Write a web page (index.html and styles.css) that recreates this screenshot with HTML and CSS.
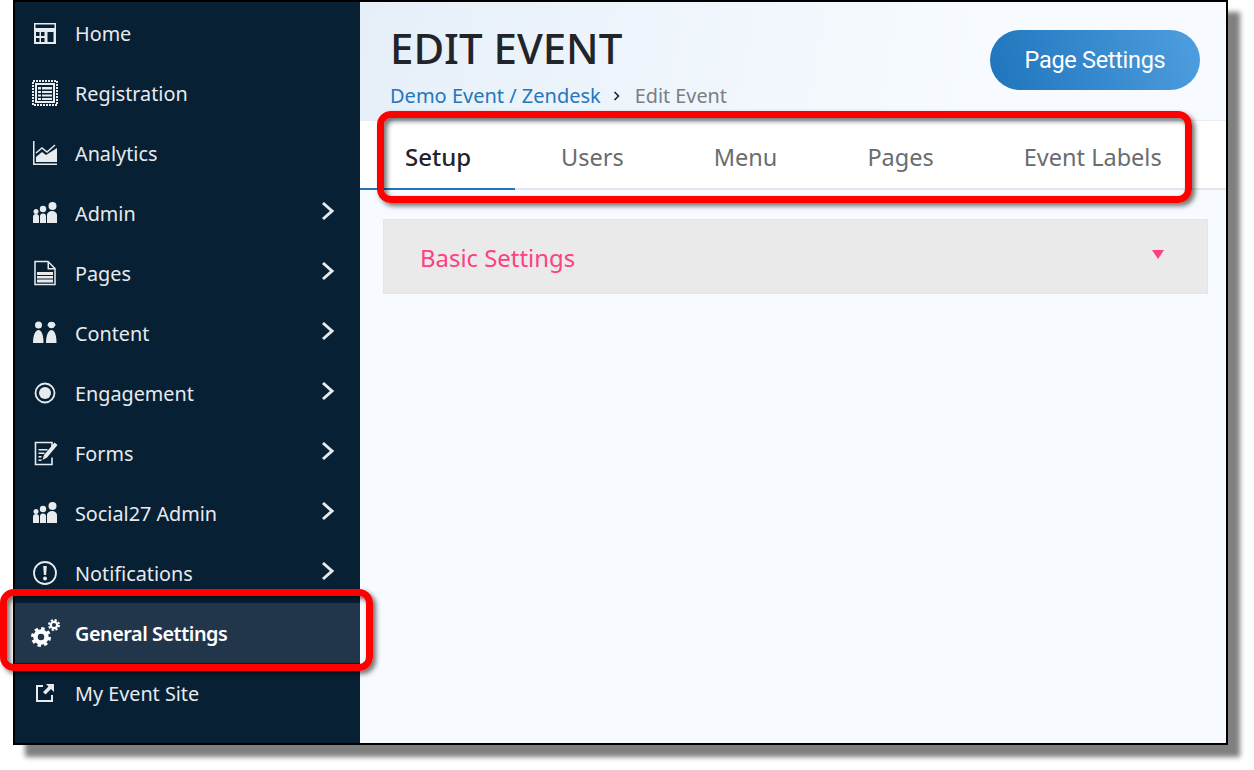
FILE: index.html
```html
<!DOCTYPE html>
<html lang="en">
<head>
<meta charset="utf-8">
<title>Edit Event</title>
<link rel="stylesheet" href="styles.css">
</head>
<body>
<div class="frame">
  <nav class="sidebar">
    <a class="item"><span class="ico"><svg width="26" height="26" viewBox="0 0 26 26"><path fill-rule="evenodd" fill="#e8ebee" d="M2 3h22v21H2zM3.500 8h19V4.500h-19zM4 12v4h3.500v-4zM9 12v4h3.500v-4zM4 18v4h3.500v-4zM9 18v4h3.500v-4zM15.500 12v10h6V12z"/></svg></span><span>Home</span></a>
    <a class="item"><span class="ico"><svg width="26" height="26" viewBox="0 0 26 26"><rect x="1" y="1" width="24" height="24" fill="none" stroke="#e8ebee" stroke-width="2" stroke-dasharray="2 1"/><path fill-rule="evenodd" fill="#e8ebee" d="M3 3h20v20H3zM5 5v16h16V5z"/><path fill="#e8ebee" d="M6 7h14v2.500H6zM6 11h14v2H6zM6 14.500h14v2H6zM6 18h14v2H6z"/><path fill="#071f33" d="M9 7h1v13H9z"/></svg></span><span>Registration</span></a>
    <a class="item"><span class="ico"><svg width="26" height="26" viewBox="0 0 26 26"><path fill="#e8ebee" d="M1 1h1.500v22.500H25V25H1z"/><path fill="#e8ebee" d="M4 22v-5l6-5 4 3 11-7v14z"/><path fill="none" stroke="#e8ebee" stroke-width="1.500" d="M4 13l6-5 5 4 8-7"/></svg></span><span>Analytics</span></a>
    <a class="item"><span class="ico"><svg width="26" height="26" viewBox="0 0 26 26"><g fill="#e8ebee"><circle cx="4" cy="11.500" r="2.500"/><circle cx="11" cy="9" r="3.200"/><circle cx="20.500" cy="6" r="4"/><path d="M1 17a3 3 0 0 1 6 0v6H1zM8 16.500a3 3 0 0 1 6 0V23H8zM15 15a5 4 0 0 1 10 0v8H15z"/></g></svg></span><span>Admin</span><svg class="chev" width="14" height="20" viewBox="0 0 14 20"><path d="M2 2l9 8-9 8" fill="none" stroke="#e8ebee" stroke-width="3"/></svg></a>
    <a class="item"><span class="ico"><svg width="26" height="26" viewBox="0 0 26 26"><path fill="none" stroke="#e8ebee" stroke-width="1.500" d="M3 1.500h13l7 7v16H3z"/><path fill="#e8ebee" d="M15.500 1.500h1.500V8h6v1.500h-7.500zM5 12h16v10.500H5z"/><path fill="#071f33" d="M5 15h16v1H5zM5 18.500h16v1H5z"/></svg></span><span>Pages</span><svg class="chev" width="14" height="20" viewBox="0 0 14 20"><path d="M2 2l9 8-9 8" fill="none" stroke="#e8ebee" stroke-width="3"/></svg></a>
    <a class="item"><span class="ico"><svg width="26" height="26" viewBox="0 0 26 26"><g fill="#e8ebee"><circle cx="6.500" cy="5" r="3.500"/><path d="M6.500 10c3 0 5 5 5 13H1c0-8 2.500-13 5.500-13z"/><path d="M15.500 6a4 4 0 0 1 8 0z"/><circle cx="19.500" cy="5" r="3.300"/><path d="M19.500 10c3 0 5 5 5 13H14c0-8 2.500-13 5.500-13z"/></g></svg></span><span>Content</span><svg class="chev" width="14" height="20" viewBox="0 0 14 20"><path d="M2 2l9 8-9 8" fill="none" stroke="#e8ebee" stroke-width="3"/></svg></a>
    <a class="item"><span class="ico"><svg width="26" height="26" viewBox="0 0 26 26"><circle cx="13" cy="13" r="9.500" fill="none" stroke="#e8ebee" stroke-width="1.800"/><circle cx="13" cy="13" r="6" fill="#e8ebee"/></svg></span><span>Engagement</span><svg class="chev" width="14" height="20" viewBox="0 0 14 20"><path d="M2 2l9 8-9 8" fill="none" stroke="#e8ebee" stroke-width="3"/></svg></a>
    <a class="item"><span class="ico"><svg width="26" height="26" viewBox="0 0 26 26"><path fill="none" stroke="#e8ebee" stroke-width="1.600" d="M20 9V2.500H3.500v22H20v-7"/><path fill="#e8ebee" d="M6.500 9h9v1.500h-9zM6.500 12.500h6V14h-6zM6.500 16h3v1.500h-3zM6.500 19.500h3V21h-3z"/><path fill="#e8ebee" d="M22.500 2.500l3 2.500-10.500 12.500-4.500 2.500 1.500-5z"/></svg></span><span>Forms</span><svg class="chev" width="14" height="20" viewBox="0 0 14 20"><path d="M2 2l9 8-9 8" fill="none" stroke="#e8ebee" stroke-width="3"/></svg></a>
    <a class="item"><span class="ico"><svg width="26" height="26" viewBox="0 0 26 26"><g fill="#e8ebee"><circle cx="4" cy="11.500" r="2.500"/><circle cx="11" cy="9" r="3.200"/><circle cx="20.500" cy="6" r="4"/><path d="M1 17a3 3 0 0 1 6 0v6H1zM8 16.500a3 3 0 0 1 6 0V23H8zM15 15a5 4 0 0 1 10 0v8H15z"/></g></svg></span><span>Social27 Admin</span><svg class="chev" width="14" height="20" viewBox="0 0 14 20"><path d="M2 2l9 8-9 8" fill="none" stroke="#e8ebee" stroke-width="3"/></svg></a>
    <a class="item"><span class="ico"><svg width="26" height="26" viewBox="0 0 26 26"><circle cx="13" cy="13" r="11" fill="none" stroke="#e8ebee" stroke-width="1.800"/><path fill="#e8ebee" d="M11.200 6h3.600l-.7 9h-2.200z"/><circle cx="13" cy="18.500" r="2" fill="#e8ebee"/></svg></span><span>Notifications</span><svg class="chev" width="14" height="20" viewBox="0 0 14 20"><path d="M2 2l9 8-9 8" fill="none" stroke="#e8ebee" stroke-width="3"/></svg></a>
    <a class="item active"><span class="ico"><svg width="30" height="30" viewBox="0 0 30 30"><g fill="none" stroke="#fff"><circle cx="11" cy="19" r="5.500" stroke-width="4.500"/><circle cx="11" cy="19" r="8.500" stroke-width="3" stroke-dasharray="3.400 3.270"/><circle cx="24" cy="7" r="3.200" stroke-width="2.200"/><circle cx="24" cy="7" r="5" stroke-width="2" stroke-dasharray="2.200 1.730"/></g></svg></span><span>General Settings</span></a>
    <a class="item"><span class="ico"><svg width="22" height="22" viewBox="0 0 22 22"><path fill="none" stroke="#e8ebee" stroke-width="2" d="M9 4H3v15h15v-6"/><path fill="#e8ebee" d="M12 2h8v8l-3-3-5.500 5.500-2.500-2.500L14.500 4.500z"/></svg></span><span>My Event Site</span></a>
  </nav>
  <main class="main">
    <header class="head">
      <div>
        <h1 class="title">EDIT EVENT</h1>
        <div class="crumbs"><a class="crumb-link">Demo Event / Zendesk</a><svg class="crumb-sep" width="8" height="12" viewBox="0 0 8 12"><path d="M1.500 2l4 4-4 4" fill="none" stroke="#222" stroke-width="1.600"/></svg><span class="crumb-now">Edit Event</span></div>
      </div>
      <button class="btn">Page Settings</button>
    </header>
    <div class="tabs">
      <a class="tab on">Setup</a>
      <a class="tab">Users</a>
      <a class="tab">Menu</a>
      <a class="tab">Pages</a>
      <a class="tab">Event Labels</a>
    </div>
    <section class="panel">
      <div class="acc"><span>Basic Settings</span><i class="tri"></i></div>
    </section>
  </main>
  <div class="mark mark-nav"></div>
  <div class="mark mark-tabs"></div>
</div>
</body>
</html>
```
FILE: styles.css
```css
* { box-sizing: border-box; }
html, body { margin: 0; height: 100%; background: #fff; overflow: hidden; }
body { padding: 0 0 0 13px; font-family: "Noto Sans", sans-serif; }
.frame {
  position: relative;
  display: flex;
  width: 1215px;
  height: 745px;
  border: 2px solid #000;
  box-shadow: 12px 12px 5px rgba(0,0,0,.5);
}
.sidebar {
  width: 345px;
  flex: none;
  background: #072034;
  padding-top: 1px;
}
.item {
  display: flex;
  align-items: center;
  height: 60px;
  padding: 0 25px 0 15px;
  color: #e8ebee;
  font-size: 19.8px;
}
.ico { width: 45px; flex: none; display: flex; align-items: center; justify-content: center; padding-right: 15px; }
.chev { margin-left: auto; margin-top: -5px; }
.item.active {
  background: #22364b;
  color: #fff;
  font-weight: 600;
  letter-spacing: -.45px;
}
.main { flex: 1; background: #f7fbff; min-width: 0; }
.head {
  height: 119px;
  display: flex;
  justify-content: space-between;
  padding: 27px 26px 0 30px;
  background: linear-gradient(100deg, #e6eff8 0%, #f7fbff 70%);
  border-bottom: 1px solid #e6edf3;
}
.title {
  margin: 0;
  font-size: 42px;
  line-height: 38px;
  font-weight: 500;
  color: #212529;
}
.crumbs { display: flex; align-items: center; margin-top: 15px; font-size: 19.8px; line-height: 28px; }
.crumb-link { color: #2277bd; font-size: 20px; }
.crumb-sep { margin: 0 14px 0 12px; }
.crumb-now { color: #7a7f83; }
.btn {
  width: 210px;
  height: 60px;
  margin-top: 1px;
  border: 0;
  border-radius: 30px;
  background: linear-gradient(70deg, #1f74bb 0%, #4f9fe0 100%);
  color: #fff;
  font-family: Roboto, sans-serif;
  font-size: 23.5px;
  font-weight: 400;
  letter-spacing: -.3px;
  padding: 0;
}
.tabs {
  display: flex;
  height: 69px;
  background: #fff;
  border-bottom: 2px solid #e4e7ea;
}
.tab {
  height: 69px;
  padding: 0 44px 0 46px;
  font-size: 23.5px;
  line-height: 72px;
  color: #686d71;
}
.tab.on {
  padding-left: 45px;
  font-size: 24px;
  color: #212529;
  font-weight: 500;
  border-bottom: 2px solid #2176bd;
}
.panel { padding: 29px 18px 0 23px; }
.acc {
  height: 75px;
  display: flex;
  align-items: center;
  justify-content: space-between;
  background: #eaeaea;
  border: 1px solid #e0e6ea;
  padding: 2px 43px 0 36px;
  font-size: 23.9px;
  color: #ff4081;
}
.tri {
  width: 0;
  height: 0;
  margin-top: -6px;
  border-left: 6px solid transparent;
  border-right: 6px solid transparent;
  border-top: 9px solid #ff4081;
}
.mark {
  position: absolute;
  border: 7px solid #ff0000;
  border-radius: 14px;
  box-shadow: 3px 3px 5px rgba(0,0,0,.55), inset 3px 3px 5px rgba(0,0,0,.55);
  pointer-events: none;
}
.mark-nav { left: -15px; top: 587px; width: 373px; height: 82px; }
.mark-tabs { left: 362px; top: 109px; width: 815px; height: 92px; }
```
